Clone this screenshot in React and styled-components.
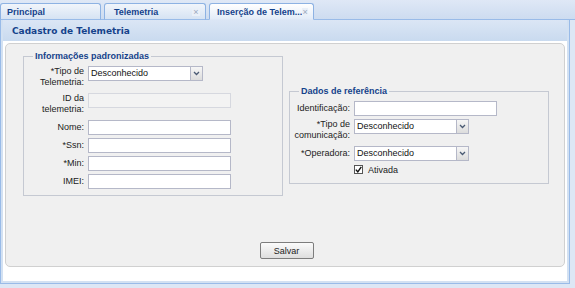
import styled, { createGlobalStyle } from "styled-components";

const GlobalStyle = createGlobalStyle`
    html, body {
        margin: 0;
        padding: 0;
        background: #dde7f5;
    }
    * {
        box-sizing: border-box;
    }
`;

const Page = styled.div`
    width: 575px;
    height: 288px;
    display: flex;
    flex-direction: column;
    font-family: "Liberation Sans", Arial, sans-serif;
    font-size: 9px;
    color: #222;
    overflow: hidden;
`;

const TabStrip = styled.div`
    height: 20px;
    display: flex;
    align-items: flex-end;
    gap: 3px;
    background: linear-gradient(#dfe8f6, #cddcf0);
    border-bottom: 1px solid #99bbe8;
`;

const Tab = styled.div`
    width: ${({ w }) => w}px;
    height: 17px;
    margin-bottom: -1px;
    display: flex;
    align-items: center;
    padding: 0 5px 0 ${({ pad }) => pad || 6}px;
    border: 1px solid #8db2e3;
    border-bottom: ${({ active }) => (active ? "1px solid #dfe8f6" : "1px solid #99bbe8")};
    border-radius: 3px 3px 0 0;
    background: ${({ active }) =>
        active ? "linear-gradient(#ffffff, #e3ecf8)" : "linear-gradient(#f1f5fb, #d6e3f3)"};
    font-weight: bold;
    color: #15428b;
    white-space: nowrap;
`;

const TabTitle = styled.span`
    flex: 1;
`;

const TabClose = styled.span`
    width: 8px;
    height: 8px;
    font-size: 9px;
    line-height: 8px;
    text-align: center;
    font-weight: normal;
    color: #9aa9be;
    background: #eaf0f8;
`;

const Panel = styled.div`
    width: 570px;
    height: 264px;
    border: 1px solid #99bbe8;
    border-top: none;
    background: #d3e1f2;
    display: flex;
    flex-direction: column;
    padding: 0 2px 2px 2px;
`;

const PanelHeader = styled.div`
    height: 21px;
    display: flex;
    align-items: center;
    padding-left: 9px;
    background: linear-gradient(#dbe6f5, #c9daef);
    font-family: "DejaVu Sans", sans-serif;
    font-size: 9px;
    font-weight: bold;
    color: #15428b;
`;

const PanelBody = styled.div`
    flex: 1;
    background: #ffffff;
    padding: 2px 2px 14px 2px;
    display: flex;
`;

const FormBox = styled.div`
    flex: 1;
    background: #f0f0f0;
    border: 1px solid #d0d0d0;
    border-radius: 5px;
    display: flex;
    flex-direction: column;
    padding: 6px 0 7px 17px;
`;

const Columns = styled.div`
    display: flex;
    align-items: flex-start;
    gap: 6px;
`;

const Group = styled.fieldset`
    width: ${({ w }) => w}px;
    margin: ${({ offset }) => offset}px 0 0 0;
    padding: 4px 4px ${({ bottom }) => bottom}px 4px;
    border: 1px solid #c5c9d2;
    display: grid;
    grid-template-columns: 56px max-content;
    column-gap: 4px;
    row-gap: 3px;
    align-items: center;
`;

const Legend = styled.legend`
    margin-left: 5px;
    padding: 0 2px;
    font-weight: bold;
    color: #15428b;
    line-height: 12px;
`;

const Label = styled.label`
    text-align: right;
    line-height: 11px;
    padding-bottom: ${({ twoLine }) => (twoLine ? "2px" : "0")};
    align-self: ${({ twoLine }) => (twoLine ? "start" : "center")};
    white-space: nowrap;
`;

const TextInput = styled.div`
    width: ${({ w }) => w || 143}px;
    height: 15px;
    border: 1px solid #b5b8c8;
    background: ${({ disabled }) => (disabled ? "#f3f3f3" : "#ffffff")};
    border-color: ${({ disabled }) => (disabled ? "#d6d8df" : "#b5b8c8")};
    align-self: start;
`;

const Select = styled.div`
    width: 115px;
    height: 15px;
    display: flex;
    align-self: start;
`;

const SelectText = styled.div`
    flex: 1;
    border: 1px solid #b5b8c8;
    border-right: none;
    background: #fff;
    padding-left: 2px;
    line-height: 13px;
    color: #111;
`;

const SelectArrow = styled.div`
    width: 13px;
    border: 1px solid #b5b8c8;
    background: linear-gradient(#f6f6f6, #dcdcdc);
    display: flex;
    align-items: center;
    justify-content: center;
`;

const CheckRow = styled.div`
    grid-column: 2;
    display: flex;
    align-items: center;
    gap: 5px;
    height: 11px;
`;

const CheckBox = styled.div`
    width: 9px;
    height: 9px;
    border: 1px solid #555;
    background: #fff;
    display: flex;
    align-items: center;
    justify-content: center;
`;

const Footer = styled.div`
    margin-top: auto;
    display: flex;
    justify-content: center;
    padding-right: 14px;
`;

const Button = styled.button`
    width: 54px;
    height: 17px;
    padding: 0;
    border: 1px solid #7d7d7d;
    border-radius: 2px;
    background: linear-gradient(#fbfbfb, #dedede);
    font-family: "Liberation Sans", Arial, sans-serif;
    font-size: 9px;
    color: #222;
`;

const Chevron = () => (
    <svg width="7" height="5" viewBox="0 0 7 5">
        <path d="M1 1 L3.5 3.5 L6 1" fill="none" stroke="#4a5a73" strokeWidth="1.3" />
    </svg>
);

const Dropdown = ({ value }) => (
    <Select>
        <SelectText>{value}</SelectText>
        <SelectArrow>
            <Chevron />
        </SelectArrow>
    </Select>
);

const App = () => {
    return (
        <>
            <GlobalStyle />
            <Page>
                <TabStrip>
                    <Tab w={101}>
                        <TabTitle>Principal</TabTitle>
                    </Tab>
                    <Tab w={102} pad={9}>
                        <TabTitle>Telemetria</TabTitle>
                        <TabClose>×</TabClose>
                    </Tab>
                    <Tab w={105} pad={7} active>
                        <TabTitle>Inserção de Telem...</TabTitle>
                        <TabClose>×</TabClose>
                    </Tab>
                </TabStrip>

                <Panel>
                    <PanelHeader>Cadastro de Telemetria</PanelHeader>
                    <PanelBody>
                        <FormBox>
                            <Columns>
                                <Group w={260} offset={0} bottom={6}>
                                    <Legend>Informações padronizadas</Legend>

                                    <Label twoLine>*Tipo de<br />Telemetria:</Label>
                                    <Dropdown value="Desconhecido" />

                                    <Label twoLine>ID da<br />telemetria:</Label>
                                    <TextInput disabled />

                                    <Label>Nome:</Label>
                                    <TextInput />

                                    <Label>*Ssn:</Label>
                                    <TextInput />

                                    <Label>*Min:</Label>
                                    <TextInput />

                                    <Label>IMEI:</Label>
                                    <TextInput />
                                </Group>

                                <Group w={260} offset={35} bottom={8}>
                                    <Legend>Dados de referência</Legend>

                                    <Label>Identificação:</Label>
                                    <TextInput />

                                    <Label twoLine>*Tipo de<br />comunicação:</Label>
                                    <Dropdown value="Desconhecido" />

                                    <Label>*Operadora:</Label>
                                    <Dropdown value="Desconhecido" />

                                    <CheckRow>
                                        <CheckBox>
                                            <svg width="7" height="7" viewBox="0 0 7 7">
                                                <path d="M0.8 3.6 L2.8 5.8 L6.3 0.8" fill="none" stroke="#111" strokeWidth="1.4" />
                                            </svg>
                                        </CheckBox>
                                        <span>Ativada</span>
                                    </CheckRow>
                                </Group>
                            </Columns>

                            <Footer>
                                <Button>Salvar</Button>
                            </Footer>
                        </FormBox>
                    </PanelBody>
                </Panel>
            </Page>
        </>
    );
};

export default App;
